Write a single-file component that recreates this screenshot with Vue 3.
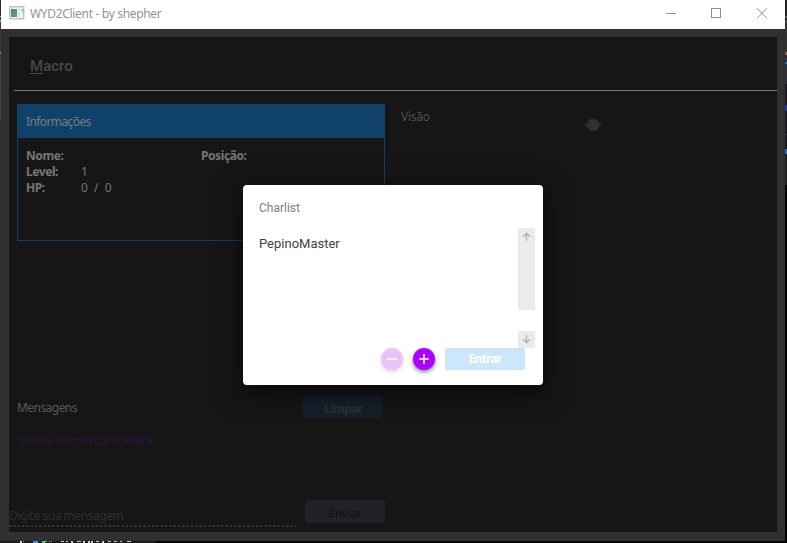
<script setup>
const chars = ['PepinoMaster']
const stats = [
  { label: 'Level:', value: '1' },
  { label: 'HP:', value: '0  /  0' },
]
</script>

<template>
  <div class="desktop">
    <div class="edge left"></div>
    <main class="window">
      <header class="titlebar">
        <svg class="app-icon" width="16" height="14" viewBox="0 0 16 14">
          <defs>
            <linearGradient id="pane" x1="0" y1="0" x2="1" y2="1">
              <stop offset="0" stop-color="#4d7fa0" />
              <stop offset="1" stop-color="#56a87c" />
            </linearGradient>
          </defs>
          <rect x=".75" y=".75" width="14" height="12" fill="#f2f3f3" stroke="#b7bdbe" stroke-width="1.3" />
          <rect x="2" y="3" width="6" height="8" fill="url(#pane)" />
          <rect x="8.500" y="3" width="2.500" height="8" fill="#dfe5e7" />
          <path d="M12 3h2v4z" fill="#8eb0cc" />
        </svg>
        <span class="app-title">WYD2Client - by shepher</span>
        <svg class="controls" width="104" height="12" viewBox="0 0 104 12" fill="none" stroke="#909090">
          <path d="M0 5.500h10M45.500 .5h9v9h-9z" shape-rendering="crispEdges" />
          <path d="M91 .3l10 10M101 .3l-10 10" />
        </svg>
      </header>

      <div class="client">
        <nav class="menu"><span class="macro"><u>M</u>acro</span></nav>
        <div class="columns">
          <div class="side">
            <section class="info">
              <h2>Informações</h2>
              <div class="info-body">
                <dl>
                  <div class="row"><dt class="nome">Nome:</dt></div>
                  <div v-for="s in stats" :key="s.label" class="row">
                    <dt>{{ s.label }}</dt><dd>{{ s.value }}</dd>
                  </div>
                </dl>
                <b class="pos">Posição:</b>
              </div>
            </section>
            <section class="messages">
              <div class="msg-head">
                <span class="msg-title">Mensagens</span>
                <button class="btn clear"><span>Limpar</span></button>
              </div>
              <p class="log">Senha numérica correta</p>
            </section>
            <div class="send-row">
              <div class="field">
                <span>Digite sua mensagem</span>
                <svg width="287" height="2" viewBox="0 0 287 2"><path d="M0 1h287" stroke="#343434" stroke-width="2" stroke-dasharray="2.330 2" /></svg>
              </div>
              <button class="btn send"><span>Enviar</span></button>
            </div>
          </div>
          <section class="vision">
            <span>Visão</span>
            <svg width="16" height="12" viewBox="0 0 16 12"><path d="M0 6h16" stroke="#2c3032" stroke-width="2" /><circle cx="8" cy="6" r="6.200" fill="#2b3134" /></svg>
          </section>
        </div>
      </div>

      <div class="dialog">
        <div class="dialog-title"><span>Charlist</span></div>
        <div class="list-row">
          <ul><li v-for="c in chars" :key="c">{{ c }}</li></ul>
          <div class="scroll">
            <div class="track">
              <svg width="9" height="9" viewBox="0 0 9 9"><path d="M4.500 8.500V1.500M1 4.800l3.500-3.500L8 4.800" /></svg>
            </div>
            <div class="down">
              <svg width="9" height="9" viewBox="0 0 9 9"><path d="M4.500 .5v7M1 4.200l3.500 3.500L8 4.200" /></svg>
            </div>
          </div>
        </div>
        <div class="actions">
          <button class="round faded"><svg width="12" height="12" viewBox="0 0 12 12"><path d="M1 6h10" /></svg></button>
          <button class="round"><svg width="12" height="12" viewBox="0 0 12 12"><path d="M1 6h10M6 1v10" /></svg></button>
          <button class="enter"><span>Entrar</span></button>
        </div>
      </div>
    </main>
    <div class="edge right"></div>
    <footer class="behind">
      <svg width="156" height="2" viewBox="0 0 156 2">
        <path d="M20 0h2v2h-2zM23 0h1l-1 1z" fill="#ddd" />
        <path d="M33 0h5v2h-5z" fill="#2f9bd0" />
        <path d="M42 0h5v1h-2v1h-3z" fill="#75b873" />
        <path d="M49 0h1v1h-1zM51 0h1v1h-1z" fill="#999" />
        <path d="M61 0h3v1h-3zM66 0h2v1h-2zM71 0h2v2h-2zM77 0h4v1h-4zM83 0h2v2h-2zM88 0h2v2h-2zM91 0h2v2h-2zM96 0h3v1h-3zM102 0h2v2h-2zM108 0h3v1h-3zM114 0h3v1h-3zM120 0h2v1h-2zM127 0h4v1h-4z" fill="#c9c9c9" />
      </svg>
    </footer>
  </div>
</template>

<style>
body { overflow: hidden; background: #000; }
</style>

<style scoped>
* { box-sizing: border-box; margin: 0; padding: 0; }
.desktop {
  width: 787px; height: 543px; background: #000;
  display: grid; grid-template: 541px 2px / 1px 784px 2px;
  font-family: "Noto Sans", "Open Sans", sans-serif; font-size: 12px;
}
span, b, dt, dd, li, p { white-space: pre; }
svg { display: block; flex: none; }
button { border: 0; font: inherit; }
.edge.left { background: linear-gradient(#29292b 0 16px, #a5b3a8 16px 17px, #303033 17px 20px, #8a9a8b 20px 22px, #38383b 22px 52px, #7777b4 52px 54px, #30305c 54px 58px, #414145 58px 120px, #343436 120px); }
.edge.right { background: linear-gradient(#222 0 16px, #555 16px 18px, #252527 18px 21px, #555 21px 22px, #333336 22px 52px, #8a6547 52px 55px, #2b2845 55px 58px, #333 58px 62px, #087ad1 62px 64px, #333337 64px 84px, #1c1c1e 84px 105px, #2638a0 105px 111px, #1c1c1e 111px 134px, #382675 134px 135px, #1c1c1e 135px 149px, #2866bd 149px 154px, #202022 154px 185px, #000 185px); }
.behind { grid-column: 1 / -1; }
.behind svg { background: #1c1c1c; }
.window { position: relative; display: flex; flex-direction: column; background: #303030; }
.titlebar { height: 29px; background: #fff; display: flex; align-items: flex-start; padding: 6px 15px 0 8px; }
.app-title { margin: -1px 0 0 5px; color: #949494; line-height: 18px; letter-spacing: -.32px; }
.controls { margin: 2px 0 0 auto; }
.client { margin: 8px 8px 9px; flex: 1; background: #161616; display: flex; flex-direction: column; }
.menu { height: 54px; margin-left: 5px; border-bottom: 1px solid #777; padding: 19px 0 0 16px; }
.macro { display: block; font: 500 15px/20px Roboto, sans-serif; color: #484848; }
.macro u { text-underline-offset: 2px; text-decoration-thickness: 1px; }
.columns { flex: 1; display: flex; }
.side { width: 376px; padding-top: 13px; display: flex; flex-direction: column; }
.info { margin-left: 8px; width: 368px; height: 137px; border: 1px solid #0f416a; }
.info h2 { height: 33px; padding-left: 8px; background: #0f416a; font-size: 12px; font-weight: 400; line-height: 33px; color: #7b7d7f; letter-spacing: -.6px; }
.info-body { display: grid; grid-template-columns: 175px 1fr; padding: 10px 8px; line-height: 16px; color: #777; }
.row { display: grid; grid-template-columns: 55px 1fr; height: 16px; }
dt, .pos { font-weight: 700; letter-spacing: -.42px; }
.messages { margin: 154px 2px 0 8px; }
.msg-head { display: flex; justify-content: space-between; height: 23px; }
.msg-title { line-height: 26px; color: #5a5a5a; letter-spacing: -.55px; }
.btn { width: 80px; height: 23px; border-radius: 3px; line-height: 27px; letter-spacing: -.6px; }
.clear { background: #14202a; color: #2c3032; font-weight: 700; }
.send { background: #1f2329; color: #121417; font-weight: 500; margin-bottom: 9px; letter-spacing: -.4px; }
.log { margin-top: 12px; font-size: 13px; line-height: 20px; color: #2b1240; letter-spacing: -.5px; }
.send-row { margin-top: auto; display: flex; align-items: flex-end; justify-content: space-between; }
.field { height: 29px; }
.field span { display: block; line-height: 26px; height: 22px; color: #2e2e2e; letter-spacing: -.45px; }
.vision { padding: 18px 0 0 16px; display: flex; color: #505050; line-height: 16px; }
.vision span { width: 184px; letter-spacing: -.25px; }
.vision svg { margin-top: 10px; }
.dialog {
  position: absolute; left: 242px; top: 185px; width: 300px; height: 200px;
  background: #fff; border-radius: 4px; box-shadow: 0 6px 24px 4px rgba(0, 0, 0, .55);
  padding: 15px 8px 0 16px; font-family: Roboto, sans-serif; display: flex; flex-direction: column;
}
.dialog-title { height: 28px; line-height: 16px; color: #7e7e7e; }
.list-row { display: flex; justify-content: space-between; height: 120px; }
ul { list-style: none; font-size: 13px; color: #424242; padding-top: 7px; line-height: 17px; }
.scroll { width: 17px; display: flex; flex-direction: column; justify-content: space-between; }
.track, .down { background: #ebebeb; display: flex; justify-content: center; padding-top: 4px; }
.track { height: 82px; }
.down { height: 17px; }
.scroll path { fill: none; stroke: #b4b4b4; stroke-width: 1.5; }
.actions { display: flex; padding-left: 122px; height: 22px; }
.round { width: 22px; height: 22px; border-radius: 50%; background: #aa00ff; display: grid; place-items: center; margin-right: 10px; box-shadow: 0 2px 4px rgba(0, 0, 0, .5); }
.round path { stroke: #fff; stroke-width: 1.500; }
.faded { background: #e9c2fc; box-shadow: 0 2px 4px rgba(0, 0, 0, .15); }
.enter { width: 80px; background: #cce6fb; border-radius: 2px; color: #fff; font: 700 12px/22px "Noto Sans", sans-serif; letter-spacing: -.8px; }
</style>
